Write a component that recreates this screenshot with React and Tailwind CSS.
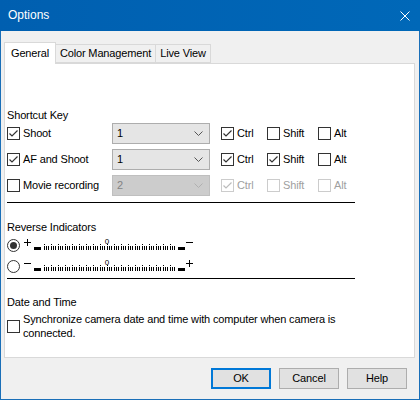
import React from "react";

const FONT = { fontFamily: '"Segoe UI", "Liberation Sans", Arial, sans-serif' };

const Check = ({ checked, disabled }) => (
  <span
    className={`inline-flex w-[13px] h-[13px] shrink-0 items-center justify-center border bg-white ${
      disabled ? "border-[#cccccc]" : "border-[#333333]"
    }`}
  >
    {checked && (
      <svg width="11" height="11" viewBox="0 0 11 11">
        <path
          d="M1.5 5.5 L4 8 L9.5 2.5"
          fill="none"
          stroke={disabled ? "#bcbcbc" : "#333333"}
          strokeWidth="1.2"
        />
      </svg>
    )}
  </span>
);

const Radio = ({ checked }) => (
  <span className="inline-flex w-[13px] h-[13px] shrink-0 items-center justify-center rounded-full border border-[#333333] bg-white">
    {checked && <span className="w-[7px] h-[7px] rounded-full bg-[#333333]" />}
  </span>
);

const Select = ({ value, disabled }) => (
  <div
    className={`w-[98px] h-[21px] flex items-center justify-between pl-[4px] pr-[6px] border ${
      disabled
        ? "bg-[#cccccc] border-[#bfbfbf] text-[#838383]"
        : "bg-[#e5e5e5] border-[#adadad] text-black"
    }`}
  >
    <span>{value}</span>
    <svg width="9" height="6" viewBox="0 0 9 6">
      <path
        d="M0.5 0.5 L4.5 4.5 L8.5 0.5"
        fill="none"
        stroke={disabled ? "#b0b0b0" : "#555555"}
        strokeWidth="1"
      />
    </svg>
  </div>
);

const Mod = ({ label, checked, disabled, w }) => (
  <div className={`flex items-center gap-[3px] ${w} ${disabled ? "text-[#a0a0a0]" : ""}`}>
    <Check checked={checked} disabled={disabled} />
    <span>{label}</span>
  </div>
);

const ShortcutRow = ({ label, checked, value, disabled, ctrl, shift }) => (
  <div className="flex items-center h-[21px]">
    <div className="w-[105px] flex items-center gap-[3px] whitespace-nowrap">
      <Check checked={checked} />
      <span>{label}</span>
    </div>
    <Select value={value} disabled={disabled} />
    <div className="flex items-center ml-[11px]">
      <Mod label="Ctrl" checked={ctrl} disabled={disabled} w="w-[46px]" />
      <Mod label="Shift" checked={shift} disabled={disabled} w="w-[51px]" />
      <Mod label="Alt" disabled={disabled} w="w-[40px]" />
    </div>
  </div>
);

const Scale = ({ reversed }) => {
  const ticks = [];
  for (let i = 0; i < 19; i++) {
    const x = 21 + i * 7;
    ticks.push(<rect key={`a${i}`} x={x} y={7} width={1} height={1} />);
    ticks.push(<rect key={`d${i}`} x={x} y={9} width={1} height={4} />);
    ticks.push(<rect key={`b${i}`} x={x + 2} y={9} width={1} height={4} />);
    ticks.push(<rect key={`c${i}`} x={x + 4} y={9} width={1} height={4} />);
  }
  const plus = (x) => (
    <>
      <rect x={x} y={5} width={7} height={1} />
      <rect x={x + 3} y={2} width={1} height={7} />
    </>
  );
  const minus = (x) => <rect x={x} y={5} width={7} height={1} />;
  return (
    <svg width="172" height="16" viewBox="0 0 172 16" fill="#000">
      <g shapeRendering="crispEdges">
        {reversed ? minus(1) : plus(1)}
        <rect x={11} y={10} width={7} height={3} />
        {ticks}
        <rect x={155} y={10} width={7} height={3} />
        {reversed ? plus(163) : minus(163)}
      </g>
      <text x={84} y={6.5} fontSize="8" fill="#000" fontFamily="Liberation Sans, sans-serif" textAnchor="middle">
        0
      </text>
    </svg>
  );
};

const Button = ({ children, primary }) => (
  <button
    className={`w-[60px] h-[21px] flex items-center justify-center bg-[#e1e1e1] text-black ${
      primary ? "border-2 border-[#0078d7]" : "border border-[#adadad]"
    }`}
  >
    {children}
  </button>
);

export default function App() {
  return (
    <div
      className="w-[420px] h-[400px] flex flex-col bg-[#f0f0f0] border-x border-b border-[#1a6fb8] text-[11px] tracking-[-0.15px] leading-[15px] text-black"
      style={FONT}
    >
      <div className="h-[31px] shrink-0 flex items-center justify-between bg-gradient-to-r from-[#005fb0] to-[#0068b8] pl-[8px] pr-[10px] text-white -mx-px">
        <span className="text-[12px] tracking-normal">Options</span>
        <svg width="10" height="10" viewBox="0 0 10 10">
          <path d="M0.5 0.5 L9.5 9.5 M9.5 0.5 L0.5 9.5" stroke="#ffffff" strokeWidth="1" />
        </svg>
      </div>

      <div className="flex flex-col pl-[3px] pr-[4px] pt-[11px]">
        <div className="flex items-end h-[21px] whitespace-nowrap">
          <div className="relative z-10 -mb-px h-[22px] w-[52px] flex items-center pl-[6px] bg-white border border-b-0 border-[#d9d9d9]">
            General
          </div>
          <div className="h-[19px] w-[100px] flex items-center justify-center bg-[#f0f0f0] border border-l-0 border-[#d9d9d9]">
            Color Management
          </div>
          <div className="h-[19px] w-[55px] flex items-center justify-center bg-[#f0f0f0] border border-l-0 border-[#d9d9d9]">
            Live View
          </div>
        </div>

        <div className="h-[295px] bg-white border border-[#d9d9d9] pl-[2px] flex flex-col">
          <div className="mt-[44px] h-[15px]">Shortcut Key</div>
          <ShortcutRow label="Shoot" checked value="1" ctrl />
          <div className="mt-[5px]">
            <ShortcutRow label="AF and Shoot" checked value="1" ctrl shift />
          </div>
          <div className="mt-[5px]">
            <ShortcutRow label="Movie recording" value="2" disabled ctrl />
          </div>
          <div className="mt-[6px] h-px w-[348px] bg-black" />

          <div className="mt-[17px] h-[15px]">Reverse Indicators</div>
          <div className="mt-[2px] h-[16px] flex items-center gap-[3px]">
            <Radio checked />
            <Scale />
          </div>
          <div className="mt-[5px] h-[16px] flex items-center gap-[3px]">
            <Radio />
            <Scale reversed />
          </div>
          <div className="mt-[4px] h-px w-[348px] bg-black" />

          <div className="mt-[16px] h-[15px]">Date and Time</div>
          <div className="mt-[2px] flex items-center gap-[3px]">
            <Check />
            <span className="leading-[14px]">
              Synchronize camera date and time with computer when camera is
              <br />
              connected.
            </span>
          </div>
        </div>

        <div className="mt-[10px] flex justify-end gap-[8px] pr-[8px]">
          <Button primary>OK</Button>
          <Button>Cancel</Button>
          <Button>Help</Button>
        </div>
      </div>
    </div>
  );
}
